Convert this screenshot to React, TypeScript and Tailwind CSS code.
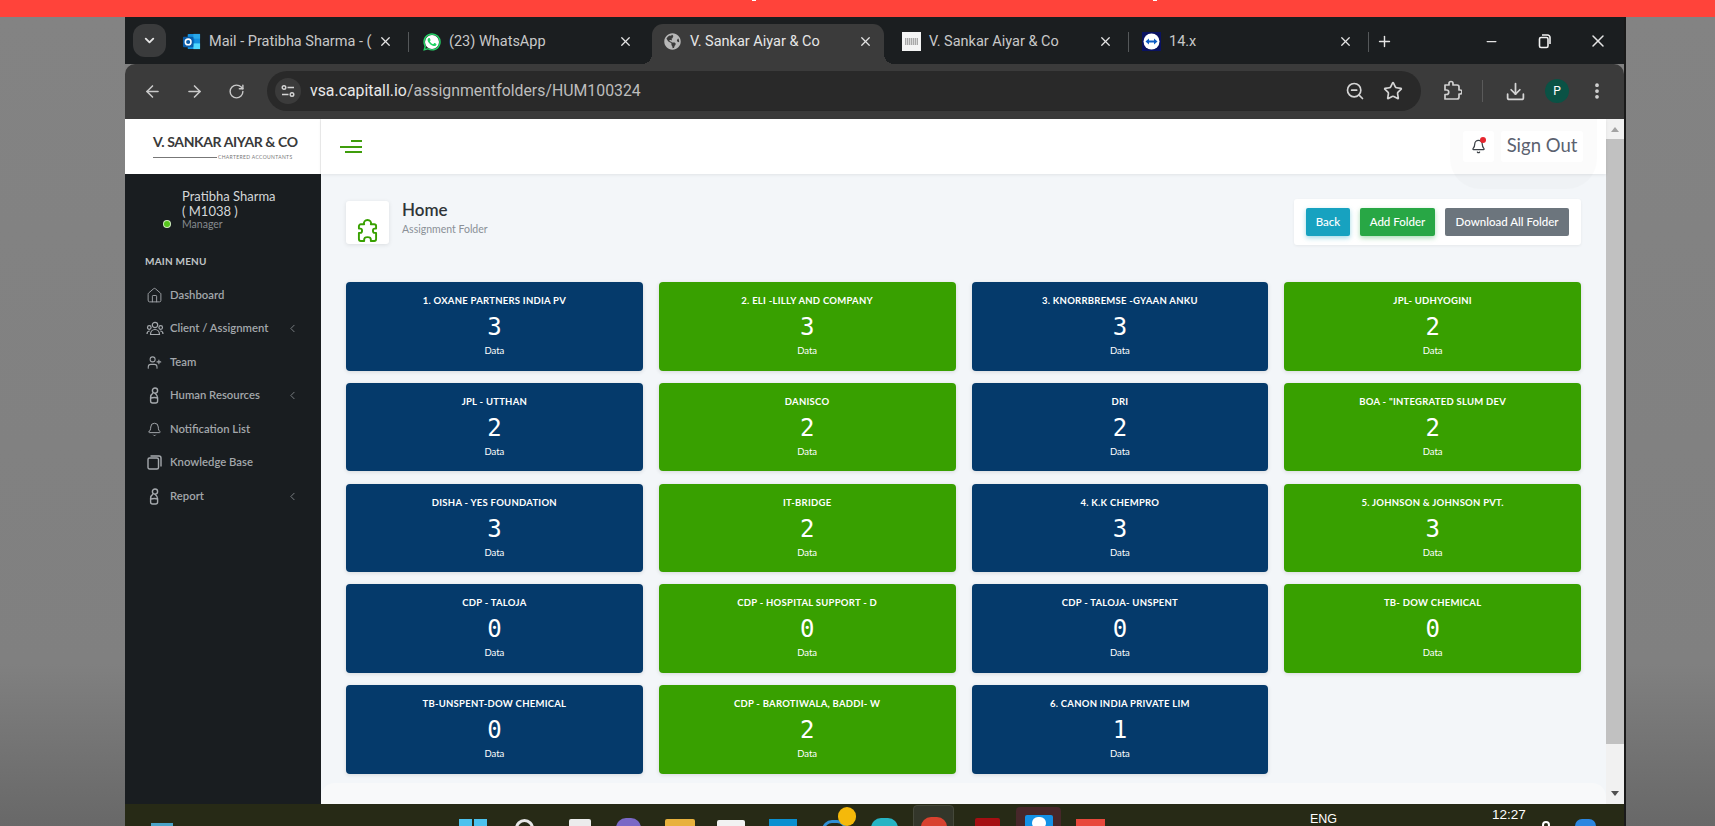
import {
  ArrowLeft,
  ArrowRight,
  Bell,
  ChevronDown,
  ChevronLeft,
  Download,
  EllipsisVertical,
  Home,
  Minus,
  Plus,
  RotateCw,
  Star,
  UserPlus,
  X,
  ZoomOut,
} from "lucide-react";
import { FaGlobeAmericas } from "react-icons/fa";
import { IoLogoWhatsapp } from "react-icons/io5";

const folders = [
  { name: "1. OXANE PARTNERS INDIA PV", count: 3 },
  { name: "2. ELI -LILLY AND COMPANY", count: 3 },
  { name: "3. KNORRBREMSE -GYAAN ANKU", count: 3 },
  { name: "JPL- UDHYOGINI", count: 2 },
  { name: "JPL - UTTHAN", count: 2 },
  { name: "DANISCO", count: 2 },
  { name: "DRI", count: 2 },
  { name: 'BOA - "INTEGRATED SLUM DEV', count: 2 },
  { name: "DISHA - YES FOUNDATION", count: 3 },
  { name: "IT-BRIDGE", count: 2 },
  { name: "4. K.K CHEMPRO", count: 3 },
  { name: "5. JOHNSON & JOHNSON PVT.", count: 3 },
  { name: "CDP - TALOJA", count: 0 },
  { name: "CDP - HOSPITAL SUPPORT - D", count: 0 },
  { name: "CDP - TALOJA- UNSPENT", count: 0 },
  { name: "TB- DOW CHEMICAL", count: 0 },
  { name: "TB-UNSPENT-DOW CHEMICAL", count: 0 },
  { name: "CDP - BAROTIWALA, BADDI- W", count: 2 },
  { name: "6. CANON INDIA PRIVATE LIM", count: 1 },
];

const OutlookIcon = () => (
  <svg width="19" height="19" viewBox="0 0 20 20">
    <rect x="6" y="2" width="13" height="16" rx="1" fill="#1490df" />
    <rect x="12" y="2" width="7" height="5" fill="#28a8ea" />
    <rect x="6" y="7" width="7" height="6" fill="#0078d4" />
    <rect x="12" y="12" width="7" height="6" fill="#50d9ff" />
    <rect x="1" y="5" width="11" height="11" rx="1" fill="#0a5ca8" />
    <circle cx="6.5" cy="10.5" r="3" fill="none" stroke="#fff" strokeWidth="1.6" />
  </svg>
);

const WhatsappIcon = () => (
  <span className="relative flex h-[20px] w-[20px] items-center justify-center">
    <span className="absolute h-[14px] w-[14px] rounded-full bg-white" />
    <IoLogoWhatsapp className="relative h-[20px] w-[20px] text-[#25d366]" />
  </span>
);

const BarcodeIcon = () => (
  <span className="flex h-[19px] w-[19px] items-center justify-center bg-[#f4f4f4]">
    <span className="h-[7px] w-[13px] bg-[repeating-linear-gradient(90deg,#a8a8a8_0,#a8a8a8_1px,#d8d8d8_1px,#d8d8d8_2px)]" />
  </span>
);

const TeamViewerIcon = () => (
  <svg width="19" height="19" viewBox="0 0 19 19">
    <rect width="19" height="19" fill="#0a1260" />
    <circle cx="9.5" cy="9.5" r="8" fill="#fff" />
    <path d="M3.5 9.5 7 6.5v2h5v-2l3.5 3-3.5 3v-2H7v2z" fill="#0e5cc4" />
  </svg>
);

const TuneIcon = () => (
  <svg width="14" height="14" viewBox="0 0 14 14" fill="none" stroke="#d5d5d5" strokeWidth="1.4">
    <circle cx="3" cy="3.5" r="1.8" />
    <path d="M6.5 3.5H13M1 10.5h6.5" />
    <circle cx="11" cy="10.5" r="1.8" />
  </svg>
);

const ExtensionIcon = () => (
  <svg width="20" height="22" viewBox="0 0 20 22" fill="none" stroke="#d0d0d0" strokeWidth="1.7" strokeLinejoin="round">
    <path d="M3 5h4V3.500a2 2 0 0 1 4 0V5h4a2 2 0 0 1 2 2v3h1a2 2 0 0 1 0 4h-1v3a2 2 0 0 1-2 2H3v-4.500h1.500a2.200 2.200 0 0 0 0-4.500H3z" />
  </svg>
);

const RestoreIcon = () => (
  <svg width="13" height="15" viewBox="0 0 13 15" fill="none" stroke="#f1f1f1" strokeWidth="1.6">
    <rect x="1.5" y="3.5" width="8.5" height="10" rx="1.5" />
    <path d="M4 1h5.5A2.5 2.5 0 0 1 12 3.5V10" />
  </svg>
);

// Person with looped body, used for Human Resources and Report
const LoopPersonIcon = () => (
  <svg width="15" height="17" viewBox="0 0 15 17" fill="none" stroke="#a5a9ad" strokeWidth="1.4">
    <circle cx="8" cy="3.6" r="2.6" />
    <path d="M6 6.2c-2 1.2-2.4 2.8-2.4 4.4V14a2 2 0 0 0 2 2h3a2 2 0 0 0 2-2v-3c0-1.6-1-3.6-2.6-4.8" />
    <path d="M3.6 11c2.4-.6 5.200-.6 7.400 0" />
  </svg>
);

const TeamGroupIcon = () => (
  <svg width="18" height="15" viewBox="0 0 18 15" fill="none" stroke="#a5a9ad" strokeWidth="1.2">
    <circle cx="9" cy="4" r="2.7" />
    <circle cx="3.300" cy="6.500" r="1.800" />
    <circle cx="14.700" cy="6.500" r="1.800" />
    <path d="M1 13c0-1.800 1.200-3 2.800-3M17 13c0-1.800-1.200-3-2.800-3M4.500 13.500C4.500 10.500 6.500 8.500 9 8.500s4.500 2 4.500 5z" />
  </svg>
);

const BookStackIcon = () => (
  <svg width="15" height="15" viewBox="0 0 15 15" fill="none" stroke="#a5a9ad" strokeWidth="1.4">
    <rect x="1" y="3" width="10.500" height="11" rx="1.500" />
    <path d="M3.500 1h8.500A2 2 0 0 1 14 3v8.500" />
  </svg>
);

const PuzzlePiece = () => (
  <svg width="21" height="23" viewBox="0 0 22 24" fill="none" stroke="#38a000" strokeWidth="2" strokeLinejoin="round">
    <path d="M7.500 5.500C6.500 3 8.500 1 11 1s4.500 2 3.500 4.500H18a2 2 0 0 1 2 2V10h-1.500c-2.400 0-2.400 4.500 0 4.500H20V21a2 2 0 0 1-2 2h-3.500v-1.500c0-3.400-7-3.400-7 0V23H4a2 2 0 0 1-2-2v-6.500h1.500c2.400 0 2.400-4.500 0-4.500H2V7.500a2 2 0 0 1 2-2z" />
  </svg>
);

const Tab = ({
  icon,
  title,
  active,
  separator,
}: {
  icon: React.ReactNode;
  title: string;
  active?: boolean;
  separator?: boolean;
}) => (
  <div className="relative flex h-[40px] w-[240px] shrink-0 items-center pb-[5px]">
    {active && (
      <>
        <div className="absolute inset-y-0 left-0 right-[8px] rounded-t-[11px] bg-[#3b3b3b]" />
        <div className="absolute bottom-0 left-[-10px] h-[10px] w-[10px] bg-[radial-gradient(circle_at_0_0,transparent_10px,#3b3b3b_10px)]" />
        <div className="absolute bottom-0 right-[-2px] h-[10px] w-[10px] bg-[radial-gradient(circle_at_100%_0,transparent_10px,#3b3b3b_10px)]" />
      </>
    )}
    <div className={`relative flex w-[232px] items-center ${active ? "pl-[11px]" : "pl-[10px]"}`}>
      <span className="flex w-[19px] shrink-0 justify-center">{icon}</span>
      <span
        className={`ml-[8px] flex-1 whitespace-nowrap text-[14.5px] ${active ? "text-[#e6e6e6]" : "text-[#c8c8c8]"}`}
      >
        {title}
      </span>
      <X className="mr-[11px] ml-[6px] h-[15px] w-[15px] shrink-0 text-[#e4e4e4]" strokeWidth={2} />
    </div>
    {separator && <div className="ml-auto mr-[3px] h-[20px] w-px bg-[#55585a]" />}
  </div>
);

const MenuItem = ({
  icon,
  label,
  chevron,
}: {
  icon: React.ReactNode;
  label: string;
  chevron?: boolean;
}) => (
  <div className="flex h-[33.5px] items-center pl-[20px] pr-[22px] text-[11.3px] font-semibold text-[#a3a7ab]">
    <span className="flex w-[19px] shrink-0 justify-center">{icon}</span>
    <span className="ml-[6px] flex-1">{label}</span>
    {chevron && <ChevronLeft className="h-[13px] w-[13px] text-[#8d9195]" strokeWidth={1.5} />}
  </div>
);

const FolderCard = ({ name, count, index }: { name: string; count: number; index: number }) => (
  <div
    className={`flex h-[88.5px] flex-col items-center rounded-[4px] pt-[12px] text-white shadow-[0_1px_4px_rgba(0,0,0,0.12)] ${
      index % 2 === 0 ? "bg-[#053a6b]" : "bg-[#38a000]"
    }`}
  >
    <div className="text-[9.5px] font-bold leading-[14px] tracking-[0.25px]">{name}</div>
    <div className="mt-[3px] font-['DejaVu_Sans_Mono',monospace] text-[24px] leading-[32px]">{count}</div>
    <div className="mt-[1px] text-[9.5px] leading-[14px]">Data</div>
  </div>
);

// Bottom of the screen: only the tops of the taskbar icons show
const Taskbar = () => (
  <div className="relative flex h-[22px] items-start overflow-hidden bg-[#272a16] font-['Liberation_Sans',sans-serif]">
    <div className="ml-[26px] mt-[19px] h-[3px] w-[22px] bg-[#4aa3c8]" />
    <div className="ml-[286px] mt-[15px] flex h-[7px] w-[28px] gap-[2px]">
      <div className="h-full flex-1 bg-[#4cc2ee]" />
      <div className="h-full flex-1 bg-[#4cc2ee]" />
    </div>
    <div className="ml-[28px] mt-[15px] h-[20px] w-[19px] rounded-full border-[3px] border-[#e6e6e6]" />
    <div className="ml-[35px] mt-[15px] h-[7px] w-[22px] rounded-t-[2px] bg-[#ececec]" />
    <div className="ml-[25px] mt-[14px] h-[20px] w-[25px] rounded-full bg-[#7a68c6]" />
    <div className="ml-[24px] mt-[15px] h-[7px] w-[30px] rounded-t-[2px] bg-[#e8b13d]" />
    <div className="ml-[22px] mt-[16px] h-[6px] w-[28px] rounded-t-[2px] bg-[#f2f2f2]" />
    <div className="ml-[24px] mt-[15px] h-[7px] w-[28px] bg-[#0a8fd0]" />
    <div className="relative ml-[25px] mt-[16px] h-[20px] w-[25px] rounded-full border-[3px] border-[#2f8fd6]" />
    <div className="absolute left-[713px] top-[3px] h-[19px] w-[18px] rounded-full bg-[#f5b90a]" />
    <div className="ml-[24px] mt-[14px] h-[20px] w-[27px] rounded-full bg-[#27b4c4]" />
    <div className="ml-[15px] mt-[1px] flex h-[30px] w-[41px] justify-center rounded-[4px] border border-[#45483a] bg-[#33362a] pt-[11px]">
      <div className="h-[20px] w-[26px] rounded-full bg-[#d8412f]" />
    </div>
    <div className="ml-[21px] mt-[14px] h-[8px] w-[25px] rounded-t-[2px] bg-[#a50e12]" />
    <div className="ml-[16px] mt-[3px] flex h-[25px] w-[45px] justify-center rounded-t-[4px] bg-[#47272a] pt-[8px]">
      <div className="flex h-[14px] w-[28px] justify-center rounded-t-[2px] bg-[#1391e6] pt-[2px]">
        <div className="h-[12px] w-[14px] rounded-full bg-white" />
      </div>
    </div>
    <div className="ml-[15px] mt-[15px] h-[7px] w-[29px] bg-[#e8483c]" />
    <div className="ml-[205px] mt-[8px] text-[12.5px] leading-[14px] text-white">ENG</div>
    <div className="ml-[155px] mt-[3px] text-[13.5px] leading-[16px] text-white">12:27</div>
    <div className="ml-[16px] mt-[17px] h-[8px] w-[8px] rounded-full border-2 border-white" />
    <div className="ml-[25px] mt-[15px] h-[7px] w-[21px] rounded-t-[10px] bg-[#2b86e0]" />
  </div>
);

export default function App() {
  return (
    <div className="flex h-[826px] w-full flex-col overflow-hidden bg-[#808080] font-['Lato',sans-serif]">
      <div className="relative h-[17px] shrink-0 bg-[#ff433a]">
        <div className="absolute left-[752px] top-0 h-[1px] w-[4px] bg-white" />
        <div className="absolute left-[1153px] top-0 h-[1px] w-[4px] bg-white" />
      </div>
      <div className="flex h-[809px]">
        <div className="w-[125px] shrink-0 bg-linear-to-b from-[#838383] via-[#808080] via-80% to-[#686868]" />

        <div className="flex w-[1501px] shrink-0 flex-col border-r-2 border-[#1a1a1a]">
          {/* tab strip */}
          <div className="flex h-[47px] shrink-0 items-end bg-[#1b1e20] pl-[8px] font-['Roboto',sans-serif]">
            <div className="mb-[7px] mr-[6px] flex h-[33px] w-[33px] shrink-0 items-center justify-center rounded-[12px] bg-[#3a3b3c]">
              <ChevronDown className="h-[15px] w-[15px] text-[#e4e4e4]" strokeWidth={3} />
            </div>
            <Tab icon={<OutlookIcon />} title="Mail - Pratibha Sharma - (" separator />
            <Tab icon={<WhatsappIcon />} title="(23) WhatsApp" />
            <Tab icon={<FaGlobeAmericas className="h-[17px] w-[17px] text-[#b8b8b8]" />} title="V. Sankar Aiyar & Co" active />
            <Tab icon={<BarcodeIcon />} title="V. Sankar Aiyar & Co" separator />
            <Tab icon={<TeamViewerIcon />} title="14.x" separator />
            <div className="mb-[1px] flex h-[40px] flex-1 items-center pb-[4px] pl-[4px] text-[#e4e4e4]">
              <Plus className="h-[17px] w-[17px]" strokeWidth={2} />
              <Minus className="ml-[91px] h-[15px] w-[15px]" strokeWidth={2} />
              <span className="ml-[39px]">
                <RestoreIcon />
              </span>
              <X className="ml-[37px] h-[20px] w-[20px]" strokeWidth={1.8} />
            </div>
          </div>

          {/* toolbar */}
          <div className="flex h-[55px] shrink-0 items-center rounded-t-[10px] bg-[#3b3b3b] pb-[1px] pl-[18px] font-['Roboto',sans-serif]">
            <ArrowLeft className="h-[19px] w-[19px] text-[#c9c9c9]" strokeWidth={2} />
            <ArrowRight className="ml-[23px] h-[19px] w-[19px] text-[#c9c9c9]" strokeWidth={2} />
            <RotateCw className="ml-[24px] h-[17px] w-[17px] text-[#c9c9c9]" strokeWidth={2} />
            <div className="ml-[22px] flex h-[40px] w-[1154px] shrink-0 items-center rounded-full bg-[#292929] pl-[8px] pr-[18px]">
              <div className="flex h-[26px] w-[26px] items-center justify-center rounded-full bg-[#3b3b3b]">
                <TuneIcon />
              </div>
              <div className="ml-[9px] flex-1 text-[15.85px] text-[#bdbdbd]">
                <span className="text-[#e8e8e8]">vsa.capitall.io</span>/assignmentfolders/HUM100324
              </div>
              <ZoomOut className="h-[20px] w-[20px] text-[#d5d5d5]" strokeWidth={2} />
              <Star className="ml-[18px] h-[20px] w-[20px] text-[#d5d5d5]" strokeWidth={2} />
            </div>
            <span className="ml-[21px]">
              <ExtensionIcon />
            </span>
            <div className="ml-[20px] h-[22px] w-px bg-[#5a5a5a]" />
            <Download className="ml-[22px] h-[21px] w-[21px] text-[#d5d5d5]" strokeWidth={2} />
            <div className="ml-[19px] flex h-[24px] w-[24px] items-center justify-center rounded-full bg-[#0a5245] text-[12px] text-white">
              P
            </div>
            <EllipsisVertical className="ml-[18px] h-[20px] w-[20px] text-[#d5d5d5]" strokeWidth={2.5} />
          </div>

          {/* app */}
          <div className="flex h-[685px] shrink-0">
            <aside className="flex w-[196px] shrink-0 flex-col bg-[#191d20]">
              <div className="flex h-[55px] shrink-0 flex-col border-r border-[#eeeeee] bg-white pl-[28px] pt-[14px] text-[#3a3a3a]">
                <div className="text-[14px] font-bold leading-[18px] tracking-[-0.4px]">V. SANKAR AIYAR &amp; CO</div>
                <div className="mt-[3px] flex items-center">
                  <div className="h-px w-[64px] bg-[#777777]" />
                  <div className="ml-[1px] text-[5px] leading-[6px] tracking-[0.35px] text-[#777777]">CHARTERED ACCOUNTANTS</div>
                </div>
              </div>
              <div className="pl-[57px] pt-[15px] text-[13px] leading-[15px] text-[#d4d7d9]">
                <div>Pratibha Sharma</div>
                <div>( M1038 )</div>
              </div>
              <div className="-mt-[2px] flex items-center pl-[39px] text-[10.5px] leading-[14px] text-[#868b8f]">
                <span className="h-[6px] w-[6px] rounded-full bg-[#55c51c] ring-1 ring-[#cfeebc]" />
                <span className="ml-[12px]">Manager</span>
              </div>
              <div className="pl-[20px] pt-[23px] text-[10px] font-bold leading-[14px] tracking-[0.2px] text-[#c0c4c7]">MAIN MENU</div>
              <div className="mt-[10.5px] flex flex-col">
                <MenuItem icon={<Home className="h-[17px] w-[17px]" strokeWidth={1.3} />} label="Dashboard" />
                <MenuItem icon={<TeamGroupIcon />} label="Client / Assignment" chevron />
                <MenuItem icon={<UserPlus className="h-[15px] w-[15px]" strokeWidth={1.7} />} label="Team" />
                <MenuItem icon={<LoopPersonIcon />} label="Human Resources" chevron />
                <MenuItem icon={<Bell className="h-[15px] w-[15px]" strokeWidth={1.6} />} label="Notification List" />
                <MenuItem icon={<BookStackIcon />} label="Knowledge Base" />
                <MenuItem icon={<LoopPersonIcon />} label="Report" chevron />
              </div>
            </aside>

            <div className="flex w-[1285px] shrink-0 flex-col bg-[#f3f6f9]">
              <header className="relative z-10 flex h-[55px] shrink-0 items-center bg-white pl-[19px] shadow-[0_1px_3px_rgba(0,0,0,0.08)]">
                <div className="flex w-[22px] flex-col items-end gap-[3.5px]">
                  <div className="h-[2px] w-[11px] bg-[#3f9d0c]" />
                  <div className="h-[2px] w-[22px] bg-[#3f9d0c]" />
                  <div className="h-[2px] w-[17px] bg-[#3f9d0c]" />
                </div>
                <div className="absolute left-[1129px] top-0 h-[70px] w-[147px] rounded-b-[30px] bg-black/[0.015]" />
                <div className="relative ml-auto mr-[23px] flex items-center gap-[7px]">
                  <div className="relative flex h-[31px] w-[31px] items-center justify-center rounded-[3px] bg-white">
                    <Bell className="h-[15px] w-[15px] text-[#3b4046]" strokeWidth={2} />
                    <span className="absolute left-[17px] top-[6px] h-[6px] w-[6px] rounded-full bg-[#e6262f]" />
                  </div>
                  <div className="flex h-[31px] w-[82px] items-center justify-center rounded-[3px] bg-white pb-[1px] text-[18.5px] text-[#5b6270]">
                    Sign Out
                  </div>
                </div>
              </header>

              <main className="flex-1 px-[25px] pt-[25px]">
                <div className="flex h-[46px] items-start">
                  <div className="mt-[2px] flex h-[43px] w-[43px] items-end justify-center rounded-[3px] bg-white pb-[2px] shadow-[0_1px_4px_rgba(0,0,0,0.1)]">
                    <PuzzlePiece />
                  </div>
                  <div className="ml-[13px]">
                    <div className="text-[17px] font-semibold leading-[22px] text-[#2f3438]">Home</div>
                    <div className="mt-[1px] text-[10.5px] leading-[14px] text-[#8a9097]">Assignment Folder</div>
                  </div>
                  <div className="ml-auto flex h-[46px] items-center gap-[10px] rounded-[3px] bg-white pl-[12px] pr-[12px] text-[11.5px] font-medium text-white shadow-[0_1px_3px_rgba(0,0,0,0.06)]">
                    <div className="flex h-[27.5px] w-[44px] items-center justify-center rounded-[2px] bg-[#17a2c0] shadow-[0_2px_5px_rgba(23,162,192,0.4)]">Back</div>
                    <div className="flex h-[27.5px] w-[75px] items-center justify-center rounded-[2px] bg-[#28a745] shadow-[0_2px_5px_rgba(40,167,69,0.4)]">Add Folder</div>
                    <div className="flex h-[27.5px] w-[124px] items-center justify-center rounded-[2px] bg-[#6c757d]">Download All Folder</div>
                  </div>
                </div>
                <div className="mt-[37px] grid grid-cols-4 gap-x-[16px] gap-y-[12.3px]">
                  {folders.map((folder, i) => (
                    <FolderCard key={folder.name} name={folder.name} count={folder.count} index={i} />
                  ))}
                </div>
              </main>

              <div className="h-[21px] shrink-0 rounded-t-[14px] bg-[#f8f9fa]" />
            </div>

            {/* page scrollbar */}
            <div className="flex w-[18px] shrink-0 flex-col items-center bg-[#f1f1f1]">
              <div className="mt-[8px] h-0 w-0 border-x-[4px] border-b-[5px] border-x-transparent border-b-[#a3a3a3]" />
              <div className="mt-[7px] h-[605px] w-full bg-[#c1c1c1]" />
              <div className="mt-[47px] h-0 w-0 border-x-[4px] border-t-[5px] border-x-transparent border-t-[#505050]" />
            </div>
          </div>

          <Taskbar />
        </div>

        <div className="flex-1 bg-linear-to-b from-[#838383] via-[#808080] via-80% to-[#686868]" />
      </div>
    </div>
  );
}
